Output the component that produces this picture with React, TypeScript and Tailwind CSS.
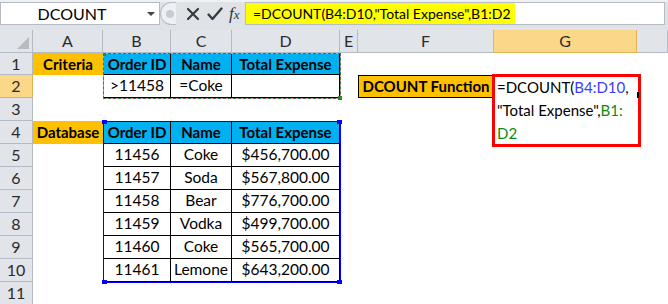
import React from "react";

const HDR = "bg-[#e1e4e9] border-r border-b border-[#b5bbc4] text-[#2b2b2b] text-[16px] flex items-center justify-center";
const HDR_SEL = "bg-[#fbd789] border-r border-b border-[#e0b44f] text-[#2b2b2b] text-[16px] flex items-center justify-center";

type C = { text?: React.ReactNode; cls?: string };

const data: [string, string, string][] = [
  ["11456", "Coke", "$456,700.00"],
  ["11457", "Soda", "$567,800.00"],
  ["11458", "Bear", "$776,700.00"],
  ["11459", "Vodka", "$499,700.00"],
  ["11460", "Coke", "$565,700.00"],
  ["11461", "Lemone", "$643,200.00"],
];

const T = "flex items-center justify-center border-black";
const B = "font-bold text-[15px]";

function FormulaBar() {
  return (
    <div className="h-[30px] bg-[#dfe3e8] border-t-2 border-[#eef0f3] flex items-start">
      <div className="w-[160px] h-[23px] bg-white border border-[#b6bcc6] flex items-center">
        <span className="w-[142px] text-center text-[16px] text-black">DCOUNT</span>
        <svg width="10" height="6" viewBox="0 0 10 6" className="ml-[3px]">
          <path d="M1 1 L9 1 L5 5 Z" fill="#444" />
        </svg>
      </div>
      <div className="w-[16px] h-[23px] rounded-l-full bg-[#eef0f3] border border-r-0 border-[#b6bcc6] flex items-center justify-center">
        <div className="w-[8px] h-[8px] rounded-full bg-[#c9cdd3] ml-[3px]" />
      </div>
      <div className="w-[69px] h-[23px] flex items-center">
        <svg width="14" height="14" viewBox="0 0 14 14" className="ml-[10px]">
          <path d="M2 2 L12 12 M12 2 L2 12" stroke="#3a3a3a" strokeWidth="2.2" strokeLinecap="round" />
        </svg>
        <svg width="16" height="14" viewBox="0 0 16 14" className="ml-[7px]">
          <path d="M1.5 7.5 L5.5 12 L14.5 1.5" stroke="#3a3a3a" strokeWidth="2.3" fill="none" strokeLinecap="round" strokeLinejoin="round" />
        </svg>
        <span className="ml-[6px] font-['Liberation_Serif',serif] italic text-[17px] text-[#333] leading-none">
          f<span className="text-[13px]">x</span>
        </span>
      </div>
      <div className="w-[420px] h-[23px] bg-white border border-[#b6bcc6] flex items-center">
        <div className="bg-[#ffff00] h-full flex items-center pl-[7px] pr-[4px] text-[14px] text-black whitespace-nowrap">
          =DCOUNT(B4:D10,"Total Expense",B1:D2
        </div>
      </div>
    </div>
  );
}

function Handle({ cls }: { cls: string }) {
  return <div className={`absolute w-[5px] h-[4px] bg-[#0000ff] ${cls}`} />;
}

export default function App() {
  const cols = ["A", "B", "C", "D", "E", "F", "G", ""];
  const rows: C[][] = [];
  rows.push([
    { text: "Criteria", cls: `bg-[#ffc000] ${B} flex items-center justify-center` },
    { text: "Order ID", cls: `${T} bg-[#00b0f0] ${B} border-l border-t border-r border-b` },
    { text: "Name", cls: `${T} bg-[#00b0f0] ${B} border-t border-r border-b` },
    { text: "Total Expense", cls: `${T} bg-[#00b0f0] ${B} border-t border-r border-b` },
    {},
    {},
    {},
    {},
  ]);
  rows.push([
    {},
    { text: ">11458", cls: `${T} border-l border-r border-b` },
    { text: "=Coke", cls: `${T} border-r border-b` },
    { text: "", cls: `${T} border-r border-b` },
    {},
    { text: "DCOUNT Function", cls: `bg-[#ffc000] border border-black ${B} flex items-center justify-center whitespace-nowrap` },
    {
      text: (
        <div className="relative h-full">
          <div className="absolute left-[-2px] right-[-4px] top-[-1px] bottom-[-3px] border-[3px] border-[#ff0000]" />
          <div className="pl-[3px] pt-[1px] leading-[23px] text-[15px] whitespace-nowrap">
            <div>
              =DCOUNT(<span className="text-[#3b3bff]">B4:D10</span>,
            </div>
            <div>
              "Total Expense",<span className="text-[#0f8a0f]">B1:</span>
            </div>
            <div className="text-[#0f8a0f]">D2</div>
          </div>
        </div>
      ),
      cls: "row-span-3",
    },
    { text: <span className="absolute left-0 top-[17px] w-[2px] h-[6px] bg-black" />, cls: "relative" },
  ]);
  rows.push([{}, {}, {}, {}, {}, {}, {}]);
  rows.push([
    { text: "Database", cls: `bg-[#ffc000] ${B} flex items-center justify-center whitespace-nowrap` },
    { text: "Order ID", cls: `${T} bg-[#00b0f0] ${B} border-l border-t border-r border-b` },
    { text: "Name", cls: `${T} bg-[#00b0f0] ${B} border-t border-r border-b` },
    { text: "Total Expense", cls: `${T} bg-[#00b0f0] ${B} border-t border-r border-b` },
    {},
    {},
    {},
  ]);
  data.forEach((d) => {
    rows.push([
      {},
      { text: d[0], cls: `${T} border-l border-r border-b` },
      { text: d[1], cls: `${T} border-r border-b` },
      { text: d[2], cls: `${T} border-r border-b` },
      {},
      {},
      {},
      {},
    ]);
  });
  rows.push([{}, {}, {}, {}, {}, {}, {}, {}]);

  return (
    <div className="w-[668px] h-[304px] overflow-hidden bg-white font-['Lato','Liberation_Sans',sans-serif] text-[15.5px] text-black">
      <FormulaBar />
      <div className="relative grid grid-cols-[33px_70px_68px_61px_108px_18px_136px_143px_1fr] grid-rows-[23px_22px_23px_23px_23px_23px_23px_23px_23px_23px_23px_23px]">
        <div className={`${HDR} items-end justify-end pr-[3px] pb-[3px]`}>
          <svg width="12" height="12" viewBox="0 0 12 12">
            <path d="M12 0 L12 12 L0 12 Z" fill="#b7bcc3" />
          </svg>
        </div>
        {cols.map((c, i) => (
          <div key={"h" + i} className={c === "G" ? HDR_SEL : HDR}>
            {c}
          </div>
        ))}
        {rows.map((r, ri) => (
          <React.Fragment key={"r" + ri}>
            <div className={ri === 1 ? HDR_SEL : HDR}>{ri + 1}</div>
            {r.map((cell, ci) => (
              <div key={ri + "-" + ci} className={cell.cls ?? ""}>
                {cell.text}
              </div>
            ))}
          </React.Fragment>
        ))}

        {/* copy marquee around B1:D2 */}
        <div className="absolute left-[103px] top-[23px] w-[238px] h-[46px] border border-[#ff7fd0] pointer-events-none">
          <div className="absolute -inset-px border border-dashed border-[#2a8a2a]" />
          <div className="absolute left-[-1px] top-[-1px] w-[3px] h-[3px] bg-[#2a8a2a]" />
          <div className="absolute right-[-2px] bottom-[-2px] w-[4px] h-[4px] bg-[#2a8a2a]" />
        </div>

        {/* selection around B4:D10 */}
        <div className="absolute left-[103px] top-[91px] w-[238px] h-[162px] border border-[#0000ff] pointer-events-none">
          <Handle cls="left-[-2px] top-[-2px]" />
          <Handle cls="right-[-2px] top-[-2px]" />
          <Handle cls="left-[-2px] bottom-[-2px]" />
          <Handle cls="right-[-2px] bottom-[-2px]" />
        </div>
      </div>
    </div>
  );
}
